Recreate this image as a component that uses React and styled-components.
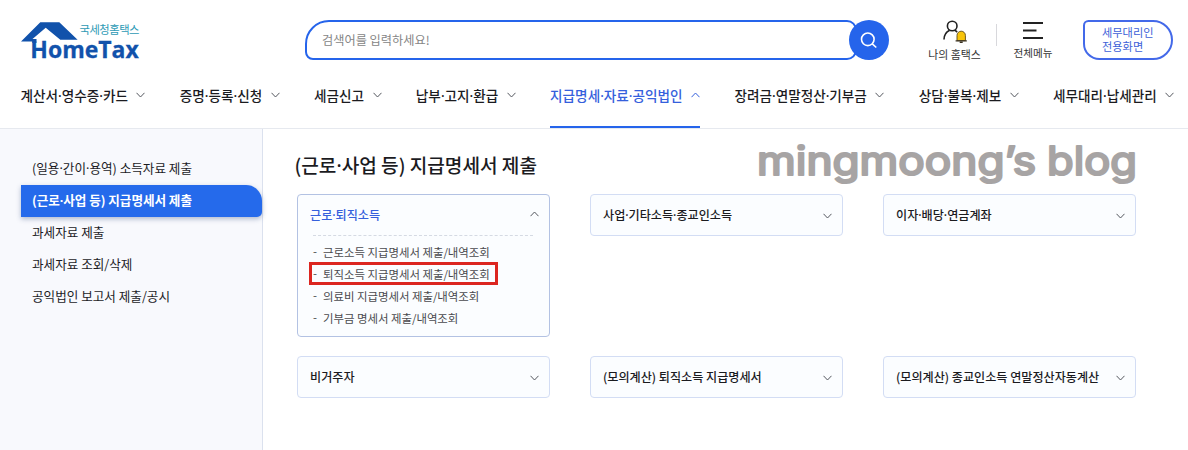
import { Fragment, useState } from "react";
import styled, { createGlobalStyle, css } from "styled-components";

const GlobalStyle = createGlobalStyle`
  * {
    box-sizing: border-box;
  }
  body {
    margin: 0;
    background: #fff;
    color: #1b1b1f;
    font-family: "Noto Sans CJK KR", "Noto Sans", sans-serif;
  }
  button {
    padding: 0;
    border: 0;
    background: none;
    color: inherit;
    font-family: inherit;
    cursor: pointer;
  }
  ul {
    margin: 0;
    padding: 0;
    list-style: none;
  }
  svg {
    display: block;
    flex-shrink: 0;
  }
`;

const Page = styled.div`
  width: 1188px;
  height: 450px;
  display: flex;
  flex-direction: column;
  overflow: hidden;
`;

const Header = styled.header`
  display: flex;
  align-items: flex-start;
  height: 76px;
  padding: 20px 15px 0 20px;
`;
const Logo = styled.a`
  flex-shrink: 0;
  width: 285px;
`;
const SearchForm = styled.div`
  display: flex;
  flex-shrink: 0;
  width: 584px;
`;
const SearchBox = styled.div`
  width: 552px;
  height: 40px;
  padding-left: 15px;
  border: 2px solid #2564eb;
  border-radius: 24px 10px 10px 8px;
  font-size: 12.2px;
  line-height: 37px;
  color: #858585;
`;
const SearchButton = styled.button`
  width: 40px;
  height: 40px;
  margin-left: -8px;
  display: flex;
  align-items: center;
  justify-content: center;
  border-radius: 50%;
  background: #2564eb;
`;
const Tools = styled.div`
  display: flex;
  flex-shrink: 0;
  margin-left: 34px;
`;
const Tool = styled.button`
  display: flex;
  flex-direction: column;
  align-items: center;
  width: ${(props) => props.$width}px;
  font-size: ${(props) => props.$size}px;
  line-height: 16px;
  white-space: nowrap;
  color: #333;
`;
const ToolDivider = styled.div`
  width: 1px;
  height: 22px;
  margin: 4px 10px 0 10px;
  background: #d8d8dc;
`;
const AgentButton = styled.button`
  width: 90px;
  height: 40px;
  margin-left: 24px;
  padding: 0 0 2px 17px;
  border: 2px solid #4369e9;
  border-radius: 6px 22px 22px 18px;
  font-size: 11.2px;
  line-height: 14px;
  text-align: left;
  color: #3d5fd8;
`;

const Nav = styled.nav`
  display: flex;
  gap: 34.3px;
  height: 53px;
  padding-left: 20.5px;
  border-bottom: 1px solid #e6e9ef;
`;
const NavItem = styled.button`
  display: flex;
  align-items: center;
  gap: 8.5px;
  height: 52px;
  padding-bottom: 15px;
  font-size: 13.6px;
  font-weight: 500;
  white-space: nowrap;
  ${(props) =>
    props.$active &&
    css`
      padding-bottom: 13px;
      border-bottom: 2px solid #2564eb;
      color: #3560dc;
    `};
`;

const Body = styled.div`
  display: flex;
  flex: 1;
`;
const Sidebar = styled.aside`
  width: 263px;
  padding: 24px 0 0 21px;
  border-right: 1px solid #dbe1ee;
  background: #f8f9fd;
`;
const SideItem = styled.li`
  height: 32px;
  padding-left: 11px;
  font-size: 12.6px;
  line-height: 30px;
  white-space: nowrap;
  cursor: pointer;
  ${(props) =>
    props.$active &&
    css`
      border-radius: 0 16px 5px 0;
      background: #256aeb;
      box-shadow: 0 2px 5px rgba(40, 70, 120, 0.35);
      color: #fff;
      font-weight: 700;
      letter-spacing: -0.04px;
    `};
`;

const Content = styled.main`
  width: 873px;
  padding-left: 34px;
`;
const TitleRow = styled.div`
  display: flex;
  justify-content: space-between;
  height: 65px;
`;
const Title = styled.h1`
  margin: 22px 0 0 -2.5px;
  font-size: 19.1px;
  font-weight: 500;
  line-height: 28px;
  white-space: nowrap;
`;
const CardGrid = styled.div`
  display: grid;
  grid-template-columns: repeat(3, 253px);
  gap: 19px 40px;
  align-items: start;
`;
const Card = styled.section`
  padding: 0 10px 0 12px;
  border: 1px solid ${(props) => (props.$open ? "#b3c2e3" : "#d3ddf4")};
  border-radius: 4px;
  background: #fbfdff;
`;
const CardHead = styled.button`
  display: flex;
  align-items: center;
  justify-content: space-between;
  width: 100%;
  height: 40px;
  padding-bottom: ${(props) => (props.$open ? 2 : 1)}px;
  font-size: 12.1px;
  font-weight: 500;
  white-space: nowrap;
  color: ${(props) => (props.$open ? "#3560dc" : "#1b1b1f")};
  svg {
    margin-top: ${(props) => (props.$open ? -1 : 3)}px;
  }
`;
const CardList = styled.ul`
  margin: 0 6px 0 3px;
  padding: 5px 0 7px;
  border-top: 1px dashed #d5dae3;
`;
const CardItem = styled.li`
  display: flex;
  height: 22px;
  font-size: 11.4px;
  line-height: 22px;
  white-space: nowrap;
  color: #4a4a4e;
  cursor: pointer;
  ${(props) =>
    props.$marked &&
    css`
      width: 189px;
      height: 23px;
      margin: -1px 0 0 -4px;
      padding-left: 1px;
      border: 3px solid #dc2620;
      line-height: 18px;
    `};
`;
const Dash = styled.span`
  width: 10px;
  margin-top: -1px;
`;
// the CJK font gives the middle dot a wide advance
const Dot = styled.span`
  font-family: "Noto Sans", sans-serif;
  line-height: 1;
`;

const navItems = [
  "계산서·영수증·카드",
  "증명·등록·신청",
  "세금신고",
  "납부·고지·환급",
  "지급명세·자료·공익법인",
  "장려금·연말정산·기부금",
  "상담·불복·제보",
  "세무대리·납세관리",
];

const sideItems = [
  "(일용·간이·용역) 소득자료 제출",
  "(근로·사업 등) 지급명세서 제출",
  "과세자료 제출",
  "과세자료 조회/삭제",
  "공익법인 보고서 제출/공시",
];

const cards = [
  {
    title: "근로·퇴직소득",
    items: [
      "근로소득 지급명세서 제출/내역조회",
      "퇴직소득 지급명세서 제출/내역조회",
      "의료비 지급명세서 제출/내역조회",
      "기부금 명세서 제출/내역조회",
    ],
    marked: 1,
  },
  { title: "사업·기타소득·종교인소득" },
  { title: "이자·배당·연금계좌" },
  { title: "비거주자" },
  { title: "(모의계산) 퇴직소득 지급명세서" },
  { title: "(모의계산) 종교인소득 연말정산자동계산" },
];

function Label({ text }) {
  return (
    <span>
      {text.split("·").map((part, index) => (
        <Fragment key={index}>
          {index > 0 && <Dot>·</Dot>}
          {part}
        </Fragment>
      ))}
    </span>
  );
}

function Chevron({ up, color = "#55585f" }) {
  return (
    <svg width="9" height="8" viewBox="0 0 9 8" fill="none" stroke={color}>
      <path d={up ? "M.5 6.200l4-4.200 4 4.200" : "M.5 1.800l4 4.200 4-4.200"} />
    </svg>
  );
}

function HomeTaxLogo() {
  return (
    <svg width="122" height="50" viewBox="20 20 122 50">
      <path
        d="M21 41.600 40.300 22.300H59.300L77.600 39.700H60.300L45.700 27.700 32.500 38.900H36.500V43H32.300V41.600Z"
        fill="#1152ab"
      />
      <text x="79.500" y="34.300" fontSize="11.300" textLength="60" fill="#2d9ab5">
        국세청홈택스
      </text>
      <text
        x="30.300"
        y="58.300"
        fontFamily="Open Sans, sans-serif"
        fontSize="23.500"
        fontWeight="700"
        textLength="108.500"
        lengthAdjust="spacingAndGlyphs"
        fill="#1152ab"
        stroke="#1152ab"
        strokeWidth="0.300"
      >
        HomeTax
      </text>
    </svg>
  );
}

function MyIcon() {
  return (
    <svg width="26" height="26" viewBox="0 0 26 26" fill="none" stroke="#222" strokeWidth="1.600">
      <circle cx="10.200" cy="6" r="4.800" />
      <path d="M2 19.600c0-4.600 1.800-7.600 5.600-9.400M12.800 10.200l2.400 1.800" />
      <path
        d="M15 20.600v-5.200a4.200 4.200 0 0 1 8.400 0v5.200z"
        fill="#f8c40a"
        stroke="#5c4715"
        strokeWidth="0.900"
      />
      <path d="M13.600 20.900h11.200M17.700 22.400h3" stroke="#3b3222" strokeWidth="1.200" />
    </svg>
  );
}

function Watermark() {
  return (
    <svg
      width="382"
      height="65"
      viewBox="0 0 382 65"
      fontFamily="Inter, sans-serif"
      fontSize="39"
      fill="#a7a4a4"
      stroke="#a7a4a4"
      strokeWidth="2.200"
      strokeLinejoin="round"
    >
      <text x="3" y="46" textLength="279" lengthAdjust="spacingAndGlyphs">
        mingmoong’s
      </text>
      <text x="293" y="46" textLength="90" lengthAdjust="spacingAndGlyphs">
        blog
      </text>
    </svg>
  );
}

export default function App() {
  const [activeNav, setActiveNav] = useState(4);
  const [activeSide, setActiveSide] = useState(1);
  const [openCard, setOpenCard] = useState(0);

  return (
    <Page>
      <GlobalStyle />
      <Header>
        <Logo>
          <HomeTaxLogo />
        </Logo>
        <SearchForm>
          <SearchBox>검색어를 입력하세요!</SearchBox>
          <SearchButton>
            <svg width="18" height="18" viewBox="0 0 18 18" fill="none" stroke="#fff" strokeWidth="1.600">
              <circle cx="7.800" cy="8.300" r="6.300" />
              <path d="M12.300 12.800l4 3.700" />
            </svg>
          </SearchButton>
        </SearchForm>
        <Tools>
          <Tool $width={63} $size={10.9}>
            <MyIcon />
            나의 홈택스
          </Tool>
          <ToolDivider />
          <Tool $width={52} $size={10.6}>
            <svg width="20" height="25" viewBox="0 0 20 25" stroke="#222" strokeWidth="2">
              <path d="M0 3h20M0 10.500h13.500M0 18h20" />
            </svg>
            전체메뉴
          </Tool>
          <AgentButton>
            세무대리인
            <br />
            전용화면
          </AgentButton>
        </Tools>
      </Header>
      <Nav>
        {navItems.map((item, index) => (
          <NavItem key={item} $active={index === activeNav} onClick={() => setActiveNav(index)}>
            <Label text={item} />
            <Chevron up={index === activeNav} color={index === activeNav ? "#3560dc" : undefined} />
          </NavItem>
        ))}
      </Nav>
      <Body>
        <Sidebar>
          <ul>
            {sideItems.map((item, index) => (
              <SideItem key={item} $active={index === activeSide} onClick={() => setActiveSide(index)}>
                <Label text={item} />
              </SideItem>
            ))}
          </ul>
        </Sidebar>
        <Content>
          <TitleRow>
            <Title>
              <Label text={sideItems[1]} />
            </Title>
            <Watermark />
          </TitleRow>
          <CardGrid>
            {cards.map((card, index) => {
              const open = index === openCard;
              return (
                <Card key={card.title} $open={open}>
                  <CardHead $open={open} onClick={() => setOpenCard(open ? -1 : index)}>
                    <Label text={card.title} />
                    <Chevron up={open} />
                  </CardHead>
                  {open && card.items && (
                    <CardList>
                      {card.items.map((item, i) => (
                        <CardItem key={item} $marked={i === card.marked}>
                          <Dash>-</Dash>
                          {item}
                        </CardItem>
                      ))}
                    </CardList>
                  )}
                </Card>
              );
            })}
          </CardGrid>
        </Content>
      </Body>
    </Page>
  );
}
